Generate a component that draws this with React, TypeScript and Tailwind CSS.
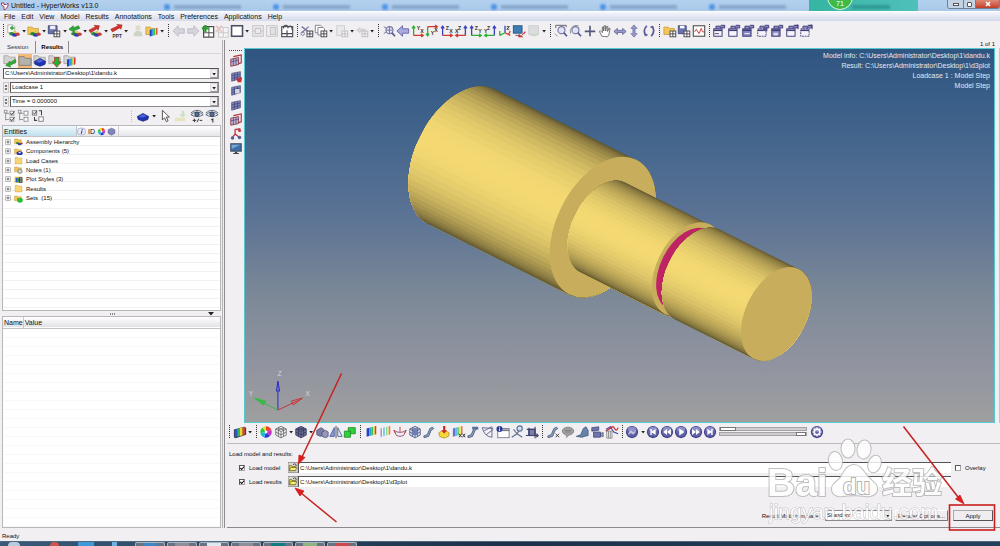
import React from 'react';

const folder = (
  <path d="M1 3.500h5l1.200 1.600H13V12H1z" fill="#f3c65a" stroke="#c6922c" strokeWidth=".8" />
);
const greyFolder = (
  <path d="M1 2h5l1.200 1.600H14V11H1z" fill="#d2d2d0" stroke="#9a9a98" strokeWidth=".8" />
);
const blobs = (
  <g>
    <ellipse cx="6.500" cy="11" rx="3" ry="2" fill="#2c8c2a" />
    <ellipse cx="10" cy="12.400" rx="3.200" ry="2.200" fill="#2d3fae" />
    <ellipse cx="13.300" cy="11.600" rx="2.400" ry="1.800" fill="#c23a3a" />
    <ellipse cx="10" cy="9.400" rx="2" ry="1.300" fill="#d9c63a" />
  </g>
);
const win = (
  <g fill="none" stroke="#4a4a50" strokeWidth="1.100">
    <rect x="8" y="8" width="6.600" height="6.600" fill="#fff" />
    <path d="M11.300 8v6.600M8 11.300h6.600" />
  </g>
);
const rainbow = (
  <g>
    <path d="M3 4l3-.8v9.500l-3 .8z" fill="#2340c8" />
    <path d="M6 3.200l2.500-.7V12l-2.500.7z" fill="#2ba5d0" />
    <path d="M8.500 2.500l2-.5v9.500l-2 .5z" fill="#3cc24c" />
    <path d="M10.500 2l1.800-.5v9.500l-1.800.5z" fill="#f2e12e" />
    <path d="M12.300 1.500l1.700-.4v9.400l-1.700.5z" fill="#e2382c" />
  </g>
);
const mesh = (
  <g>
    <path d="M3 5l10-2v8L3 14z" fill="#7d83b8" stroke="#3a3f70" strokeWidth=".7" />
    <path d="M6.300 4.300v9M9.600 3.700v8.400M3 8l10-2.300M3 11l10-2.600" stroke="#3a3f70" strokeWidth=".7" />
  </g>
);
const redMesh = (
  <g>
    <path d="M2 6l9-2v8l-9 2z" fill="#b9b4d2" stroke="#8d3340" strokeWidth="1" />
    <path d="M5 3l9-2v9l-3 1" fill="none" stroke="#b3303c" strokeWidth="1.300" />
    <path d="M5 5.300v8M8 4.700v8M2 9l9-2" stroke="#5a4a80" strokeWidth=".9" />
  </g>
);
const cube = (fill: string, line: string) => (
  <g stroke={line} strokeWidth=".9" fill={fill}>
    <path d="M8 1.500l6 3v7l-6 3.200-6-3.200v-7z" />
    <path d="M2 4.500l6 3 6-3M8 7.500v7M2 8l6 3.200L14 8M5 3v10M11 3v10M5 3l6 3M11 3L5 6" fill="none" />
  </g>
);
const axis = (c1: string, c2: string, a: string, b: string, flip: boolean, down = false) => (
  <g>
    <g transform={flip ? 'translate(16 0) scale(-1 1)' : undefined}>
      <g transform={down ? 'translate(0 16) scale(1 -1)' : undefined} fill="none" strokeWidth="1.500">
        <path d="M3 13V3M1.200 5L3 2.500 4.800 5" stroke={c1} />
        <path d="M3 13h10M11.500 11.200l2.500 1.800-2.500 1.800" stroke={c2} />
      </g>
    </g>
    <text x={flip ? 4.500 : 6.500} y={down ? 13 : 6.500} fontSize="6" fontWeight="bold" fill="#333">{a}</text>
    <text x={flip ? 1 : 10.500} y={down ? 9 : 10.500} fontSize="6" fontWeight="bold" fill="#333">{b}</text>
  </g>
);
const pages = (dx: boolean, fill: boolean) => (
  <g stroke="#3f3c7c" strokeWidth="1.100">
    <path d="M4.500 5.500V2.500h5v3M10 4.500h4.500v-3H10" fill="#8d8bc0" />
    <rect x="2" y="5.500" width="9.500" height="8.500" fill={fill ? '#8b89bd' : '#f6f4fa'} strokeDasharray={dx ? '2 1' : undefined} />
    <path d="M2 7.200h9.500" strokeWidth="1.800" />
  </g>
);
const ball = (glyph: React.ReactNode) => (
  <g>
    <circle cx="8" cy="8" r="7" fill="#45458c" />
    <circle cx="8" cy="7.500" r="5.800" fill="#6364a8" />
    <ellipse cx="8" cy="5" rx="4.500" ry="2.600" fill="#8f90c8" />
    <g fill="#fff">{glyph}</g>
  </g>
);
const beam = (
  <path d="M2 12.500l4-1.500 3-7 3-1.500 1.500 1.500-3 2-3 7-5 1.500z" fill="#8ba3c2" stroke="#3f5270" strokeWidth=".9" />
);
const lens = (
  <g fill="none">
    <circle cx="8.500" cy="7" r="4" fill="#dfe3f4" stroke="#7779a6" strokeWidth="1.300" />
    <path d="M11.300 10l3.500 4" stroke="#55558a" strokeWidth="2" />
  </g>
);
const tree = (
  <g fill="none" stroke="#8b8b93" strokeWidth="1">
    <path d="M3 2v11M3 5h4M3 12h4" />
    <rect x="1.500" y="1.500" width="3" height="3" fill="#fff" />
    <rect x="8" y="2.500" width="4.500" height="4.500" fill="#fff" />
    <rect x="8" y="9.500" width="4.500" height="4.500" fill="#fff" />
  </g>
);
const wheel = (
  <g>
    <path d="M8 8V1.500A6.500 6.500 0 0 1 14 5.500z" fill="#e8452c" />
    <path d="M8 8l6-2.500A6.500 6.500 0 0 1 12.500 12.700z" fill="#c930c4" />
    <path d="M8 8l4.500 4.700A6.500 6.500 0 0 1 6 14.200z" fill="#3038dd" />
    <path d="M8 8l-2 6.200A6.500 6.500 0 0 1 1.600 9z" fill="#20b6d8" />
    <path d="M8 8L1.600 9A6.500 6.500 0 0 1 4 2.900z" fill="#2cc63a" />
    <path d="M8 8L4 2.900A6.500 6.500 0 0 1 8 1.500z" fill="#f0dc2c" />
    <circle cx="8" cy="8" r="1.600" fill="#fff" />
  </g>
);
const eye = (
  <g fill="none" stroke="#4e5a70">
    <path d="M1 6.500Q8 .5 15 6.500Q8 11 1 6.500z" fill="#eef2f8" />
    <path d="M1 4.500Q8-1.500 15 4.500" />
    <circle cx="8" cy="6" r="2.500" fill="#58708f" stroke="#2c3c54" />
  </g>
);
const blueGem = (
  <g>
    <path d="M1.500 8.500l6.500-3.500 6.500 3.500-1 3.500-5.500 2-5.500-2z" fill="#1e32b4" stroke="#121d72" strokeWidth=".7" />
    <path d="M3 8.500l5-2.500 4 2-5 2z" fill="#4d66d8" />
  </g>
);

const ICONS: Record<string, React.ReactNode> = {
  New: <g><path d="M2 1h6l2 2v7H2z" fill="#fdfdf8" stroke="#9a9a94" strokeWidth=".8" /><path d="M7 2v5M4.500 4.500h5" stroke="#3aa13c" strokeWidth="1.600" />{blobs}</g>,
  Open: <g>{folder}{blobs}</g>,
  Save: <g><path d="M1.500 2h10v9h-10z" fill="#6c74ad" stroke="#3d447c" /><path d="M3.500 2h6v4h-6z" fill="#eef" />{win}</g>,
  Import: <g><path d="M1 6l5-4v2.500l6-2.500 1.500 3L7 7.500l1 2.500z" fill="#2fa836" stroke="#1c6e22" strokeWidth=".6" />{blobs}</g>,
  Export: <g><path d="M13 2L7 1.500l1.500 1.500L1 7l2 3 7-4.500L11.500 7z" fill="#d8322c" stroke="#8f1b18" strokeWidth=".6" />{blobs}</g>,
  'Export PPT': <g><path d="M15 1L9 .5l1.500 1.500L2 6l2 3 8-4.500L13.500 6z" fill="#d8322c" stroke="#8f1b18" strokeWidth=".6" /><text x="4" y="15.500" fontSize="5.500" fontWeight="bold" fill="#333">PPT</text></g>,
  User: <g opacity=".5"><circle cx="8" cy="4.500" r="3" fill="#d4c8a4" /><path d="M3 14c0-5 2-6 5-6s5 1 5 6z" fill="#a5bd9d" /></g>,
  Contours: <g>{folder}<g transform="translate(3 3.500) scale(.8)">{rainbow}</g></g>,
  Back: <path d="M1 8l6-6v3.500h7v5H7V14z" fill="#d6d4dc" stroke="#bcbac4" />,
  Forward: <path d="M15 8L9 2v3.500H2v5h7V14z" fill="#d6d4dc" stroke="#bcbac4" />,
  'Add page': <g><rect x="3" y="3" width="11.500" height="12" fill="#fff" stroke="#444" strokeWidth="1.300" /><path d="M3 10h11M9 3v12" stroke="#444" /><path d="M5 1v8M1 5h8" stroke="#2c9e33" strokeWidth="2.600" /></g>,
  'Delete page': <g opacity=".4"><rect x="4" y="4" width="11" height="11" fill="#fff" stroke="#888" /><path d="M1 2l7 7M8 2L1 9" stroke="#d88" strokeWidth="2.200" /><path d="M4 10h11M9.500 4v11" stroke="#888" /></g>,
  'Page layout': <rect x="1.800" y="2" width="12.500" height="12" fill="#fff" stroke="#4d5060" strokeWidth="1.800" />,
  'Expand window': <g opacity=".4" fill="none" stroke="#888" strokeWidth="1.200"><rect x="2" y="2" width="12" height="12" fill="#e6e4ea" /><path d="M5 5h6v6H5zM2 8h3M11 8h3" /></g>,
  'Shrink window': <g opacity=".4" fill="none" stroke="#888" strokeWidth="1.200"><rect x="2" y="2" width="12" height="12" fill="#f4f2f6" /><path d="M6 4h6v8H6z" fill="#ccc" /></g>,
  'Swap windows': <g fill="none" stroke="#4a4a54" strokeWidth="1.300"><rect x="2" y="3" width="12.500" height="11.500" fill="#fff" /><path d="M8 7v7.500M2 11h12M4 5q0-4 3-3.500T9 5M10 3q4-2 4 4" /></g>,
  Cut: <g><path d="M2 3l9 7M2 10l8-7" stroke="#77779c" strokeWidth="1.500" /><circle cx="3" cy="11" r="2" fill="none" stroke="#77779c" />{win}</g>,
  Copy: <g fill="#fff" stroke="#777784"><path d="M1.500 1.500h6l1.500 1.500v7H1.500z" /><path d="M4.500 4h6l1.500 1.500v7H4.500z" />{win}</g>,
  Paste: <g opacity=".3"><rect x="2" y="2" width="9" height="11" fill="#ddd" stroke="#777" />{win}</g>,
  'Paste special': <g opacity=".3"><path d="M1 7l5-4v2h6v4H6v2z" fill="#999" />{win}</g>,
  'Fit view': <g>{lens}<path d="M5 7h7M8.500 3.500v7M2 3l3 2M2 11l3-2" stroke="#6b6d92" /></g>,
  'Previous view': <path d="M1 8l6.500-6v3.500h7v5h-7V14z" fill="#a9aae0" stroke="#6264a6" />,
  'XY Top': axis('#2fae34', '#d03a30', 'Y', 'X', false),
  'XY Bottom': axis('#2fae34', '#d03a30', 'Y', 'X', false, true),
  'XZ Front': axis('#3a44b8', '#d03a30', 'Z', 'X', false),
  'XZ Rear': axis('#3a44b8', '#d03a30', 'Z', 'X', true),
  'YZ Left': axis('#3a44b8', '#2fae34', 'Z', 'Y', false),
  'YZ Right': axis('#3a44b8', '#2fae34', 'Z', 'Y', true),
  Isometric: <g fill="none" strokeWidth="1.500"><path d="M8 10V2" stroke="#3a44b8" /><path d="M8 10l-6 3M2 8v5" stroke="#2fae34" /><path d="M8 10l6 3M14 8l-2 4" stroke="#d03a30" /><path d="M10 3h3l-3 3h3" stroke="#333" strokeWidth="1" /></g>,
  'Capture view': <g><rect x="1.500" y="2" width="10" height="8.500" fill="#3d7db8" stroke="#32507a" /><path d="M4 13h6" stroke="#555" /><path d="M15 8l-5 6-2-3-1 4h6l-2-1.500L15.500 10z" fill="#c8282a" /></g>,
  'Saved views': <g opacity=".3"><rect x="2" y="2" width="11" height="10" fill="#a8b8a8" stroke="#778" /><path d="M4 14l4-5 4 5z" fill="#79a879" /></g>,
  'Zoom area': <g>{lens}<path d="M2 1.500h12M2 1.500v3M14 1.500v2" stroke="#555" fill="none" /><path d="M1 11l3 3" stroke="#888" /></g>,
  'Circle zoom': <g>{lens}<path d="M3 11A7 7 0 0 1 12 2" fill="none" stroke="#888" /></g>,
  Centre: <path d="M8 2v12M2 8.500h12" stroke="#55587c" strokeWidth="1.900" />,
  Pan: <path d="M4.500 14l-3-5.500 1.200-.8L5 10V3.500h1.500V8l.5-6h1.500L8.800 8l1-5.200h1.400L11 8.500l1.500-3.800 1.300.5L12.500 12l-1.500 2.500z" fill="#fff" stroke="#555" strokeWidth=".9" />,
  'Pan horizontal': <path d="M1 8.500L5 5v2.300h6V5l4 3.500-4 3.500V9.700H5V12z" fill="#9a9ccc" stroke="#4c4f86" strokeWidth=".8" />,
  'Pan vertical': <path d="M8 1L4.500 5h2.300v6H4.500L8 15l3.500-4H9.200V5h2.300z" fill="#9a9ccc" stroke="#6668a0" strokeWidth=".8" />,
  Rotate: <g fill="none" stroke="#5b5e9e" strokeWidth="2"><path d="M5.500 2Q0 8 5 13.500M10.500 14Q16 8 11 2.500" /><path d="M2.500 12.500h4M9.500 3.500h4" strokeWidth="1.300" /></g>,
  'Open session': <g>{folder}{win}</g>,
  'Save session': <g><path d="M1.500 2h9v9h-9z" fill="#6a72b0" stroke="#3d447c" /><path d="M3.500 2h5v3h-5z" fill="#fff" />{win}</g>,
  'Plot page': <g><rect x="1.500" y="2" width="13" height="12" fill="#fff" stroke="#555" strokeWidth="1.300" /><path d="M3 9l2-3 3 5 2.500-6 1.500 4h2" fill="none" stroke="#c9302c" /></g>,
  'Publish session': <g>{pages(false, false)}<path d="M3 11h5" stroke="#3f3c7c" /></g>,
  'Publish page': pages(false, false),
  'Publish window': <g>{pages(false, true)}<path d="M4 11h6" stroke="#fff" /></g>,
  'Publish image': <g>{pages(false, true)}<path d="M4 10h5v3H4z" fill="#dcdcf0" /></g>,
  'Capture screen': <g>{pages(true, false)}<rect x="8" y="4" width="5" height="4" fill="#56548f" /></g>,
  'Capture region': <g>{pages(false, false)}<path d="M11 2l4-1v5" fill="none" stroke="#3f3c7c" /></g>,
  'Record region': <g>{pages(true, false)}<path d="M11 2l4-1v5" fill="none" stroke="#3f3c7c" /></g>,

  'Load results': <g>{greyFolder}<path d="M14 6l-6 4V8l-5 5 6 2-1.500-1.500L15 9z" fill="#2fae34" stroke="#1d7a22" strokeWidth=".6" /></g>,
  Folder: <path d="M1 3h6l1.200 2H15v8H1z" fill="#b4b2ae" stroke="#777" strokeWidth=".9" />,
  'Component view': <g>{greyFolder}{blueGem}</g>,
  'Sets view': <g>{greyFolder}<path d="M7.500 4v5H5l5 6 5-6h-2.500V4z" fill="#22b52c" stroke="#b0302a" strokeWidth=".9" /></g>,
  'Result view': <g>{greyFolder}<g transform="translate(2 3) scale(.85)">{rainbow}</g></g>,
  'Check all': <g>{tree}<path d="M8.500 4.500l1.500 2 3-4M8.500 11.500l1.500 2 3-4" fill="none" stroke="#333" /></g>,
  'Uncheck all': tree,
  Invert: <g fill="#fff" stroke="#777"><rect x="1.500" y="2" width="5" height="5" /><path d="M2.500 4l1.500 2 2.500-4" fill="none" stroke="#333" /><rect x="9" y="9" width="5" height="5" /><path d="M9 2h3v5M4 9v4h3" fill="none" stroke="#444" strokeWidth="1.200" /></g>,
  'Entity type': blueGem,
  Select: <path d="M5 1.500v11l2.500-2.500 2 4.500 2-1-2-4.300H13z" fill="#fff" stroke="#444" />,
  Isolate: <g opacity=".5"><path d="M2 10h12v4H2z" fill="#d9dc8c" /><path d="M10 2v4H7l4 4 4-4h-2V2z" fill="#a5d6a0" /></g>,
  'Show or hide': <g>{eye}<path d="M3 13h4M5 11v4M8 15l2-4M11 13h3" stroke="#333" strokeWidth="1.100" /></g>,
  'Show only': <g>{eye}<path d="M7 12.500l2-1V15.500" stroke="#333" fill="none" strokeWidth="1.200" /></g>,

  'Mask elements': redMesh,
  'Delete elements': <g>{mesh}<path d="M15 9l-5 2-2-1 2 5h4z" fill="#cc2b31" /></g>,
  'Display mode': <g>{mesh}<path d="M7 7h5v5H7z" fill="#f4f4fa" opacity=".8" /></g>,
  'Mesh mode': mesh,
  'Section cut': redMesh,
  Measure: <g fill="none"><path d="M3 13l4-5 5 4M7 8V3l6-1" stroke="#c33a4a" strokeWidth="1.500" /><circle cx="4" cy="12.500" r="2" fill="#55609c" /><circle cx="12" cy="12" r="2" fill="#55609c" /><circle cx="12" cy="4" r="1.800" fill="#c33a4a" /></g>,
  Monitor: <g><rect x="2" y="2" width="12" height="8.500" fill="#3b6ea6" stroke="#44505e" strokeWidth="1.200" /><path d="M3 3h10L3 8z" fill="#76a6d4" /><path d="M6.800 11h2.500v1.500h2v1.300H4.800v-1.300h2z" fill="#444" /></g>,

  'Contour panel': <g><path d="M1 5l12-3 2 1v8L3 15l-2-1z" fill="#3b3f5a" /><path d="M2 5l3-.8v9L2 14z" fill="#3552cf" /><path d="M5 4.200l3-.7v9l-3 .7z" fill="#35b954" /><path d="M8 3.500l3-.7v9l-3 .7z" fill="#f1d62c" /><path d="M11 2.800l2.500-.6v8.600l-2.500.8z" fill="#dd4a2b" /></g>,
  'Colour wheel': wheel,
  'Wire mesh': cube('#f4f4f4', '#5f5f66'),
  'Shaded mesh': cube('#6d6f96', '#33355c'),
  'Transparency cubes': <g fill="#7b7da6" stroke="#44466e" strokeWidth=".8"><path d="M2 6l5-3 3 2v6l-4 2-4-2z" /><path d="M8 8l4-2 3 2v5l-3 1.500-4-1.500z" fill="#9698bd" /></g>,
  Symmetry: <g><path d="M6 3v10H1z" fill="#8b9dd6" stroke="#485c9c" /><path d="M10 3v10h5z" fill="#e8ecf8" stroke="#485c9c" /><path d="M8 1v14" stroke="#444" /></g>,
  'Green cubes': <g fill="#2fd03c" stroke="#168a20" strokeWidth=".9"><path d="M6 3h8v7H6z" /><path d="M1.500 7h7v7h-7z" /></g>,
  'Contour map': rainbow,
  'Iso map': <g opacity=".65">{rainbow}<path d="M5 3v9.500M8.500 2.500v9.500" stroke="#fff" strokeWidth="1.500" /></g>,
  'Deformed shape': <g fill="none"><path d="M1 6q7 5 14 0l-3 6q-4 2-8 0z" fill="#f0eaf2" stroke="#8a4a6a" /><path d="M1 6l2 4M8 2v6M15 6l-2 4" stroke="#c03a3a" /></g>,
  'Iso surface': <g>{cube('#d8dcec', '#4a5480')}<path d="M5 7l3-2 3 2v4l-3 1-3-1z" fill="#6d7fb4" /></g>,
  'Beam section': beam,
  'Apply load': <g><path d="M2 9l3-2h6l3 2-1 4-5 2-5-2z" fill="#f5d83b" stroke="#a48a1c" strokeWidth=".8" /><path d="M7 1h2.500v5h2L8.200 10 5 6h2z" fill="#cf2622" /></g>,
  Derived: <g><g opacity=".7" transform="translate(-2 0)">{rainbow}</g><path d="M8 10l3 4M11 10l-3 4M12 10l3 4M15 10l-3 4" stroke="#333" strokeWidth="1.100" /></g>,
  'Beam stress': <g>{beam}<path d="M7 2h7v3H7z" fill="#56719c" /></g>,
  Streamlines: <g fill="none" stroke="#5a5f8a"><path d="M1.500 3q2 10 11 11V2M1.500 3l12 1M3 7l9-5M6 11l8-6" /></g>,
  'Entity note': <g><rect x="2" y="4" width="13" height="10.500" fill="#fff" stroke="#76788c" /><path d="M2 6h13" stroke="#76788c" strokeWidth="2" /><circle cx="4" cy="4.500" r="3.500" fill="#2e3b96" /><path d="M4 4v3M4 2v1" stroke="#fff" /></g>,
  Tracking: <g fill="none" stroke="#5c6f92" strokeWidth="1.300"><circle cx="11" cy="4" r="3" fill="#cfe4ee" /><path d="M10 7l-2 3-6 4M8 10l6 4M4 5l4 5" /></g>,
  'System axes': <g fill="none" stroke="#3f4166" strokeWidth="1.300"><rect x="4.500" y="5" width="7" height="7" fill="#7b7eae" /><path d="M1 12h14M11.500 2v13M4.500 3v9M2 5h9.500M13 10l2 2-2 2" /></g>,
  'Vector edit': <g>{beam}<path d="M11 10l4 4M15 10l-4 4" stroke="#333" /></g>,
  Note: <g><ellipse cx="8" cy="7" rx="6.500" ry="4.500" fill="#a2a2a2" stroke="#7e7e7e" /><path d="M5 10l1 5 4-4z" fill="#9a9a9a" /><path d="M4 6h8M5 8h6" stroke="#7a7a7a" /></g>,
  'Beam tool': <path d="M1.500 13l5-2 3-7 3-2 2.500 4v6l-4 1-3 1z" fill="#6684aa" stroke="#3a5070" strokeWidth=".8" />,
  'Animation record': <g fill="#6f74ac" stroke="#3e4272" strokeWidth=".8"><path d="M2 3l8-1v4l-8 1zM4 8h8v6H4z" /><path d="M12 10l3-1.500v5L12 12z" fill="#9ab" /></g>,
  'Build plots': <g fill="none"><path d="M6 4q3-4 5 0t4-1" stroke="#cb2f3a" strokeWidth="1.500" /><path d="M1 5l5-3 4 6 5 2" stroke="#3c48b8" strokeWidth="1.200" /><path d="M1 7l6-4" stroke="#cb2f3a" strokeWidth="1.500" /><path d="M2 7h6v8H2zM4 7v8M6 7v8" stroke="#888" /></g>,

  Transient: ball(<path d="M4 9.500q2-5 4-2.500t4-2v3q-2 4-4 2t-4 2z" opacity=".6" />),
  First: ball(<path d="M5 4.500h1.600v3L11 4.500v7L6.600 8.500v3H5z" />),
  Rewind: ball(<path d="M8 4.500v7L3.500 8zM12.500 4.500v7L8 8z" />),
  Play: ball(<path d="M6 4l6 4-6 4z" />),
  'Fast forward': ball(<path d="M8 4.500v7L12.500 8zM3.500 4.500v7L8 8z" />),
  Last: ball(<path d="M11 4.500H9.400v3L5 4.500v7l4.400-3v3H11z" />),
  Settings: (
    <g>
      {ball(null)}
      <circle cx="8" cy="8" r="3.200" fill="none" stroke="#fff" strokeWidth="1.800" />
      <path d="M8 2.800v2M8 11.200v2M2.800 8h2M11.200 8h2M4.300 4.300l1.400 1.400M10.300 10.300l1.400 1.400M11.700 4.300l-1.400 1.400M5.700 10.300l-1.400 1.400" stroke="#fff" strokeWidth="1.400" />
    </g>
  ),

  Assembly: <g>{folder}{blobs}</g>,
  Components: <g>{folder}<ellipse cx="10" cy="11" rx="5.500" ry="3.300" fill="#1f2fae" /><ellipse cx="10" cy="10" rx="2.200" ry="1" fill="#fff" /></g>,
  Plain: <path d="M2 2.500h5l1 1.500h6V14H2z" fill="#f6d679" stroke="#cf9f3c" strokeWidth=".9" />,
  Notes: <g>{folder}<circle cx="10.500" cy="11" r="4" fill="#b9b9b4" stroke="#77776f" /><circle cx="10.500" cy="11" r="1.500" fill="#eee" /></g>,
  Styles: <g><path d="M1 3h13v11H1z" fill="#f3c65a" /><path d="M3 5h3.500v8H3z" fill="#3550cc" /><path d="M6.500 5H9v8H6.500z" fill="#2c9c3c" /><path d="M9 4h6v10H9z" fill="#333" /><path d="M10.500 6h3M10.500 9h3M10.500 12h3" stroke="#fff" strokeWidth="1.200" /></g>,
  Sets: <g>{folder}<path d="M6 8h4l1-1 4 2v4l-3 2-5-1z" fill="#27c02f" stroke="#148a1c" strokeWidth=".7" /></g>,
  Info: <g><rect x="1" y="2" width="14" height="12" rx="5" fill="#e6eaf6" stroke="#8e97b8" /><path d="M9 6.500L7.500 12M9.500 3.500l-.4 1.500" stroke="#3446b0" strokeWidth="2" /></g>,
  Gem: <path d="M2 5l6-3 6 3v6l-6 3.500L2 11z" fill="#8284bc" stroke="#55578e" />,
  'Browse file': <g><rect x="0" y="0" width="16" height="16" fill="#dbd8d0" stroke="#777" /><path d="M2 5h4l1 1.500h5V13H2z" fill="#e6d83a" stroke="#55501a" /><path d="M2 13l2.500-5H14l-2 5z" fill="#f7ef7a" stroke="#55501a" /><path d="M8 3.500q3-3 5 0v2.500" fill="none" stroke="#222" strokeWidth="1.200" /></g>,
};

function Icon({ name, size = 'w-[14px] h-[14px]' }: { name: string; size?: string }) {
  return (
    <svg viewBox="0 0 16 16" className={`${size} block shrink-0`} aria-hidden="true">
      {ICONS[name]}
    </svg>
  );
}

function Tool({ name, active }: { name: string; active?: boolean }) {
  return (
    <button type="button" aria-label={name} className={`block shrink-0 ${active ? 'bg-[#f6b877]' : ''}`}>
      <Icon name={name} />
    </button>
  );
}

function Caret() {
  return (
    <svg viewBox="0 0 6 6" className="h-[6px] w-[6px] shrink-0" aria-hidden="true">
      <path d="M1.300 2h3.600L3.100 4.500z" fill="#222" />
    </svg>
  );
}

function Grip() {
  return <span className="mr-[2px] h-[13px] w-0 shrink-0 border-l border-dotted border-[#333]" />;
}

function Group({ items, width }: { items: string[]; width: string }) {
  return (
    <div className={`flex shrink-0 items-center justify-between pr-[2px] pl-px ${width}`}>
      <Grip />
      {items.map((n, i) => (n === 'v' ? <Caret key={i} /> : n === '_' ? <span key={i} className="w-px" /> : <Tool key={i} name={n} />))}
    </div>
  );
}

const TOP_GROUPS: { width: string; items: string[] }[] = [
  { width: 'w-[165px]', items: ['New', 'v', 'Open', 'v', 'Save', 'v', 'Import', 'v', 'Export', 'v', 'Export PPT', 'v', '_', 'User', 'Contours', 'v'] },
  { width: 'w-[129px]', items: ['Back', 'Forward', 'Add page', 'Delete page', 'Page layout', 'v', 'Expand window', 'Shrink window', 'Swap windows'] },
  { width: 'w-[81px]', items: ['Cut', 'Copy', 'v', 'Paste', 'v', 'Paste special', 'v'] },
  { width: 'w-[172px]', items: ['Fit view', 'Previous view', 'XY Top', 'XY Bottom', 'XZ Front', 'XZ Rear', 'YZ Left', 'YZ Right', 'Isometric', 'Capture view', 'Saved views', 'v'] },
  { width: 'w-[109px]', items: ['Zoom area', 'Circle zoom', 'Centre', 'Pan', 'Pan horizontal', 'Pan vertical', 'Rotate'] },
  { width: 'w-[50px]', items: ['Open session', 'Save session', 'Plot page'] },
  { width: 'w-[107px]', items: ['Publish session', 'Publish page', 'Publish window', 'Capture screen', 'Publish image', 'Capture region', 'Record region'] },
];

const BOTTOM_GROUPS: { width: string; items: string[] }[] = [
  { width: 'w-[27px]', items: ['Contour panel', 'v'] },
  { width: 'w-[104px]', items: ['Colour wheel', 'Wire mesh', 'v', 'Shaded mesh', 'v', 'Transparency cubes', 'Symmetry', 'Green cubes'] },
  { width: 'w-[182px]', items: ['Contour map', 'Iso map', 'Deformed shape', 'Iso surface', 'Beam section', 'Apply load', 'Derived', 'Beam stress', 'Streamlines', 'Entity note', 'Tracking', 'System axes'] },
  { width: 'w-[80px]', items: ['Vector edit', 'Note', 'Beam tool', 'Animation record', 'Build plots'] },
  { width: 'w-[98px]', items: ['Transient', 'v', 'First', 'Rewind', 'Play', 'Fast forward', 'Last'] },
];

const MENUS = ['File', 'Edit', 'View', 'Model', 'Results', 'Annotations', 'Tools', 'Preferences', 'Applications', 'Help'];

const TREE = [
  { icon: 'Assembly', label: 'Assembly Hierarchy' },
  { icon: 'Components', label: 'Components (5)' },
  { icon: 'Plain', label: 'Load Cases' },
  { icon: 'Notes', label: 'Notes (1)' },
  { icon: 'Styles', label: 'Plot Styles (3)' },
  { icon: 'Plain', label: 'Results' },
  { icon: 'Sets', label: 'Sets  (15)' },
];

function TitleBar() {
  return (
    <header className="relative flex h-[11px] shrink-0 items-center overflow-hidden bg-linear-to-b from-[#b3d0ee] to-[#a9c9ea]">
      <svg viewBox="0 0 16 16" className="ml-px h-2 w-2" aria-hidden="true">
        <path d="M1 2h5v3h5l3-3v6l-5 7H6V9L1 6z" fill="#fff" stroke="#a02c4c" strokeWidth="1.800" />
      </svg>
      <h1 className="z-10 ml-[2px] text-[7px] leading-none text-[#111]">Untitled - HyperWorks v13.0</h1>
      <div className="ml-[66px] flex h-full flex-1 items-end gap-[32px] overflow-hidden pb-px blur-[1px]" aria-hidden="true">
        {[0, 1, 2, 3, 4, 5].map((i) => (
          <span key={i} className="flex shrink-0 items-center gap-1">
            <span className="h-[6px] w-[6px] rounded-full bg-[#4d93e6]" />
            <span className="h-[4px] w-[67px] bg-[#8aa8c9]" />
          </span>
        ))}
      </div>
      <div className="flex h-full w-[109px] items-end justify-end bg-linear-to-r from-[#35b5a2] to-[#4fc0bb] pr-[28px] pb-[2px]">
        <span className="h-[4px] w-[38px] bg-[#2f9a96] blur-[1px]" />
      </div>
      <div className="h-full w-[29px]" />
      <div className="flex h-[9px] self-start overflow-hidden rounded-b-[3px] border border-t-0 border-[#6f8296]">
        <button type="button" aria-label="Minimize" className="flex w-[16px] items-center justify-center border-r border-[#6f8296] bg-[#c3d3e4]">
          <span className="h-[3px] w-[6px] border border-[#555] bg-white" />
        </button>
        <button type="button" aria-label="Restore" className="flex w-[12px] items-center justify-center border-r border-[#6f8296] bg-[#c3d3e4]">
          <span className="h-[5px] w-[5px] rounded-[1px] border border-[#555] bg-white" />
        </button>
        <button type="button" aria-label="Close" className="flex w-[23px] items-center justify-center bg-linear-to-b from-[#dd8a77] to-[#c23a24]">
          <svg viewBox="0 0 6 6" className="h-[6px] w-[6px]" aria-hidden="true">
            <path d="M1 1l4 4M5 1L1 5" stroke="#fff" strokeWidth="1.500" />
          </svg>
        </button>
      </div>
      <span className="absolute -top-[17px] right-[147px] flex h-[27px] w-[26px] items-end justify-center rounded-full border border-[#e5f5e5] bg-[#3dbb45] pb-[2px] text-[7px] leading-none text-white">
        71
      </span>
    </header>
  );
}

function Combo({ label, value, spin }: { label: string; value: string; spin?: boolean }) {
  return (
    <div className="flex h-[11px] items-stretch gap-px pl-[3px]">
      {spin && (
        <span className="flex w-[6px] flex-col justify-between border border-[#c8c6c8] bg-[#f2f0f2]" aria-hidden="true">
          <svg viewBox="0 0 6 10" className="h-full w-full">
            <path d="M1 3.500L3 1l2 2.500zM1 6.500L3 9l2-2.500z" fill="#111" />
          </svg>
        </span>
      )}
      <div className="relative flex-1 border border-[#8a8a8c] border-t-[#555] border-l-[#555] bg-white">
        <select aria-label={label} className="block h-full w-full appearance-none pl-px leading-[9px] text-[#111] outline-none">
          <option>{value}</option>
        </select>
        <span className="pointer-events-none absolute inset-y-0 right-0 flex w-[8px] items-center justify-center border border-[#dddbdd] border-r-[#999] border-b-[#999] bg-[#f1eff1]">
          <Caret />
        </span>
      </div>
    </div>
  );
}

function Sidebar() {
  return (
    <aside className="mr-px flex w-[223px] shrink-0 flex-col border-r border-[#b4b2b4] pr-px">
      <nav className="flex h-[13px] items-end gap-[7px] pl-[7px] leading-[10px]">
        <button type="button" className="pb-px text-[#333]">Session</button>
        <button type="button" className="h-[12px] border-x border-[#8e8c8e] px-[5px] pb-px font-bold text-black">Results</button>
      </nav>
      <div className="flex h-[15px] items-center gap-px border-t border-[#d8d6d8] pl-[3px]">
        <Tool name="Load results" />
        <Tool name="Folder" active />
        <Tool name="Component view" />
        <Tool name="Sets view" />
        <Tool name="Result view" />
      </div>
      <div className="flex flex-col gap-[3px] pr-[2px]">
        <Combo label="Model file" value="C:\Users\Administrator\Desktop\1\dandu.k" />
        <Combo label="Loadcase" value="Loadcase 1" spin />
        <Combo label="Simulation" value="Time = 0.000000" spin />
      </div>
      <div className="flex h-[18px] items-center justify-between pr-[2px] pl-[3px]">
        <div className="flex">
          <Tool name="Check all" />
          <Tool name="Uncheck all" />
          <Tool name="Invert" />
        </div>
        <div className="flex items-center gap-px">
          <span className="mr-[3px] h-[11px] border-l border-dotted border-[#bbb]" />
          <Tool name="Entity type" />
          <Caret />
          <Tool name="Select" />
          <Tool name="Isolate" />
          <span className="w-px" />
          <Tool name="Show or hide" />
          <Tool name="Show only" />
        </div>
      </div>
      <div className="ml-[2px] flex h-[186px] shrink-0 flex-col border border-[#b9b7b9] bg-white">
        <div className="flex h-[11px] shrink-0 items-center border-b border-[#c4c4c8] bg-linear-to-b from-white to-[#e6e6ea] text-[7px] leading-none text-[#111]">
          <span className="flex h-full w-[74px] items-center border-r border-[#c0c6cc] bg-linear-to-b from-[#eef8fc] to-[#bfe0ee] pl-px">Entities</span>
          <span className="flex h-full items-center gap-px border-r border-[#d0d0d4] pr-[2px]">
            <Icon name="Info" size="w-[9px] h-[9px]" />
            <span className="px-px">ID</span>
            <Icon name="Colour wheel" size="w-[9px] h-[9px]" />
            <Icon name="Gem" size="w-[9px] h-[9px]" />
          </span>
        </div>
        <div className="flex-1 bg-[linear-gradient(to_bottom,transparent_8px,#f1f1f3_8px)] bg-[length:100%_9px]">
          <ul className="grid h-[66px] auto-rows-fr">
            {TREE.map((t) => (
              <li key={t.label} className="flex items-center gap-[3px] pl-[2px] leading-none whitespace-pre text-[#111]">
                <svg viewBox="0 0 7 7" className="h-[6px] w-[6px]" aria-hidden="true">
                  <rect x=".5" y=".5" width="6" height="6" rx="1" fill="#eee" stroke="#999" strokeWidth=".8" />
                  <path d="M2 3.500h3M3.500 2v3" stroke="#444" strokeWidth=".8" />
                </svg>
                <Icon name={t.icon} size="w-[9px] h-[9px]" />
                <span>{t.label}</span>
              </li>
            ))}
          </ul>
        </div>
      </div>
      <div className="flex h-[5px] shrink-0 items-center justify-end pr-[7px]" aria-hidden="true">
        <span className="mr-[93px] h-[2px] w-[5px] border-y border-dotted border-[#888]" />
        <svg viewBox="0 0 6 4" className="h-[4px] w-[6px]"><path d="M0 0h6L3 3.500z" fill="#222" /></svg>
      </div>
      <div className="ml-[2px] flex flex-1 flex-col border border-[#b9b7b9] bg-white">
        <table className="w-full border-collapse text-left text-[7px] leading-none text-[#111]">
          <thead>
            <tr className="h-[11px] border-b border-[#c4c4c8] bg-linear-to-b from-white to-[#e2e2e6]">
              <th className="w-[20px] border-r border-[#c8c8cc] p-0 pl-px font-normal">Name</th>
              <th className="p-0 pl-px font-normal">Value</th>
            </tr>
          </thead>
        </table>
        <div className="flex-1 bg-[linear-gradient(to_bottom,transparent_8px,#f8f8fa_8px)] bg-[length:100%_9px]" />
      </div>
    </aside>
  );
}

const AXIS_DEG = 26.6;
const FACETS = 36;

function shade(t: number) {
  const light = Math.max(0, Math.sin(Math.PI * t));
  const k = 0.34 + 0.66 * Math.pow(light, 1.05);
  return `rgb(${Math.round(244 * k)},${Math.round(217 * k)},${Math.round(115 * k)})`;
}

function Shaft({ id, x, y, length, major, minor }: { id: string; x: number; y: number; length: number; major: number; minor: number }) {
  const bands = Array.from({ length: FACETS }, (_, i) => {
    const from = -major * Math.cos((Math.PI * i) / FACETS);
    return { from, height: major - from, fill: shade((i + 0.5) / FACETS) };
  });
  return (
    <g transform={`translate(${x} ${y}) rotate(${AXIS_DEG})`}>
      <clipPath id={id}>
        <path d={`M0 ${-major}H${length}A${minor} ${major} 0 0 1 ${length} ${major}H0A${minor} ${major} 0 0 1 0 ${-major}z`} />
      </clipPath>
      <g clipPath={`url(#${id})`}>
        {bands.map((b) => (
          <rect key={b.from} x={-minor} y={b.from} width={length + minor * 2} height={b.height} fill={b.fill} />
        ))}
      </g>
    </g>
  );
}

function Face({ x, y, major, minor, fill }: { x: number; y: number; major: number; minor: number; fill: string }) {
  return <ellipse rx={minor} ry={major} fill={fill} transform={`translate(${x} ${y}) rotate(${AXIS_DEG})`} />;
}

function Model() {
  return (
    <svg viewBox="0 0 750 374" preserveAspectRatio="xMidYMid meet" className="block h-full w-full" role="img" aria-label="Stepped shaft model">
      <g transform="translate(-245 -49)">
        <Shaft id="shaft-large" x={461.5} y={156.8} length={158.4} major={75.3} minor={46} />
        <Face x={603.2} y={227.5} major={75.3} minor={46} fill="#c8ae5c" />
        <Shaft id="shaft-middle" x={603.4} y={227.9} length={94.5} major={50.3} minor={30.7} />
        <Face x={688} y={269.7} major={50.3} minor={30.7} fill="#c8ae5c" />
        <Face x={688} y={269.7} major={44.4} minor={27} fill="#be2463" />
        <Shaft id="shaft-small" x={698} y={275} length={88.6} major={50.3} minor={30.7} />
        <Face x={777.3} y={314.7} major={50.3} minor={30.7} fill="#c8ae5c" />
      </g>
      <g fill="none" strokeWidth="1">
        <path d="M32.500 362V334" stroke="#2a2fc4" />
        <path d="M31 343l1.500-10 1.700 10z" stroke="#2a2fc4" fill="#7379c8" />
        <path d="M32.500 362L10 351" stroke="#39b84a" />
        <path d="M9 350l11 3-2 4z" stroke="#39b84a" fill="#39b84a" />
        <path d="M32.500 362L56 351" stroke="#cc3436" />
        <path d="M57 350l-11 3 2 4z" stroke="#cc3436" />
      </g>
      <g fill="#d4d6da" fontSize="7">
        <text x="32" y="328">Z</text>
        <text x="3" y="348">Y</text>
        <text x="60" y="348">X</text>
      </g>
    </svg>
  );
}

function Viewport() {
  return (
    <main className="relative min-w-0 flex-1 border border-[#53c9cf] bg-[linear-gradient(#2f5581,#3a5f88_15%,#5b7395_45%,#7f8a98_68%,#9194a0_85%,#9f9f9f)]">
      <Model />
      <div className="absolute top-[2px] right-[4px] text-right text-[7px] leading-[10px] text-[#e4e8ee]">
        <p>Model info: C:\Users\Administrator\Desktop\1\dandu.k</p>
        <p>Result: C:\Users\Administrator\Desktop\1\d3plot</p>
        <p>Loadcase 1 : Model Step</p>
        <p>Model Step</p>
      </div>
    </main>
  );
}

function CheckBox({ id, label, checked }: { id: string; label: string; checked?: boolean }) {
  return (
    <span className="flex items-center gap-[4px]">
      <span className="relative flex h-[6px] w-[6px]">
        <input
          id={id}
          type="checkbox"
          defaultChecked={checked}
          className="peer h-[6px] w-[6px] appearance-none border border-[#a8a6a8] border-t-[#555] border-l-[#555] bg-white"
        />
        <svg viewBox="0 0 6 6" className="pointer-events-none absolute inset-0 hidden h-[6px] w-[6px] peer-checked:block" aria-hidden="true">
          <path d="M1.300 2.800l1.400 1.700 2.500-3" fill="none" stroke="#000" strokeWidth="1.100" />
        </svg>
      </span>
      <label htmlFor={id}>{label}</label>
    </span>
  );
}

function PathRow({ id, label, value, children }: { id: string; label: string; value: string; children?: React.ReactNode }) {
  return (
    <div className="flex h-[11px] items-center">
      <div className="w-[49px] shrink-0">
        <CheckBox id={id} label={label} checked />
      </div>
      <button type="button" aria-label={`Browse ${label}`} className="shrink-0">
        <Icon name="Browse file" size="w-[10px] h-[11px]" />
      </button>
      <input
        type="text"
        aria-label={`${label} path`}
        defaultValue={value}
        className="h-[11px] min-w-0 flex-1 border-t border-l border-[#555] bg-white pl-px leading-none text-[#111] outline-none"
      />
      <div className="w-[49px] shrink-0 pl-[4px]">{children}</div>
    </div>
  );
}

function PanelArea() {
  return (
    <section className="flex h-[85px] shrink-0 flex-col border-t border-b border-t-[#bdbbbd] border-b-[#8c8a8c] pl-[2px] leading-none text-[#111]">
      <p className="pt-[7px] pb-[5px]">Load model and results:</p>
      <div className="flex flex-col gap-[3px] pl-[10px]">
        <PathRow id="load-model" label="Load model" value="C:\Users\Administrator\Desktop\1\dandu.k">
          <CheckBox id="overlay" label="Overlay" />
        </PathRow>
        <PathRow id="load-results" label="Load results" value="C:\Users\Administrator\Desktop\1\d3plot" />
      </div>
      <div className="mt-auto mb-[6px] flex items-center justify-end pr-[7px]">
        <label htmlFor="template">Result Math template:</label>
        <span className="relative mr-[3px] ml-[5px] h-[11px] w-[67px] border border-[#8a8a8c] bg-white">
          <select id="template" className="block h-full w-full appearance-none pl-px leading-[9px] outline-none">
            <option>Standard</option>
          </select>
          <span className="pointer-events-none absolute inset-y-0 right-0 flex w-[7px] items-center justify-center bg-[#e9e7e9]">
            <Caret />
          </span>
        </span>
        <button type="button" className="mr-[5px] h-[11px] w-[53px] border border-[#fff] border-r-[#777] border-b-[#777] bg-[#efedef] whitespace-nowrap">Reader Options...</button>
        <button type="button" className="h-[11px] w-[40px] border border-[#aaa] border-r-[#555] border-b-[#555] bg-[#efedef]">Apply</button>
      </div>
    </section>
  );
}

function Watermark() {
  return (
    <svg viewBox="0 0 184 90" className="pointer-events-none absolute right-[52px] bottom-[20px] h-[90px] w-[184px]" aria-hidden="true">
      <g fill="#fff" stroke="#b4b2b4" strokeWidth="2" paintOrder="stroke" opacity=".82">
        <text x="3" y="60" fontSize="39" fontWeight="bold">Bai</text>
        <ellipse cx="71.500" cy="25" rx="6.500" ry="9" transform="rotate(-12 71.500 25)" />
        <ellipse cx="84" cy="12.500" rx="6.500" ry="9" />
        <ellipse cx="100" cy="13.500" rx="6.500" ry="9" transform="rotate(8 100 13.500)" />
        <ellipse cx="110.500" cy="28" rx="6" ry="8.500" transform="rotate(20 110.500 28)" />
        <path d="M90 29c7 0 10 8 15 13s9 7 8 12-7 7-12 6-17-1-22 0-11-1-11-7 6-7 9-12 6-12 13-12z" />
        <text x="118" y="57" fontSize="30" fontWeight="bold" className="[font-family:'Noto_Sans_CJK_SC',sans-serif]">经验</text>
        <text x="5" y="83" fontSize="21" strokeWidth="1">jingyan.baidu.com</text>
      </g>
      <text x="79" y="58" fontSize="22" fontWeight="bold" fill="#fff" stroke="#b4b2b4" strokeWidth="2" paintOrder="stroke">du</text>
    </svg>
  );
}

function Callouts() {
  return (
    <>
      <svg viewBox="0 0 60 160" className="pointer-events-none absolute bottom-[16px] left-[290px] h-[160px] w-[60px]" aria-hidden="true">
        <g fill="#e01b1b" stroke="#c8201f" strokeWidth="1.500">
          <path d="M51.500 3.500L12 87" />
          <path d="M8.500 94l.5-9 6 2.500z" strokeWidth=".8" />
          <path d="M46.500 152L11 123" />
          <path d="M5 118l9 3-4 5z" strokeWidth=".8" />
        </g>
      </svg>
      <svg viewBox="0 0 100 110" className="pointer-events-none absolute right-0 bottom-[14px] h-[110px] w-[100px]" aria-hidden="true">
        <g fill="#e01b1b" stroke="#c8201f" strokeWidth="1.500">
          <path d="M3.500 4.500L58 75" />
          <path d="M64 82l-8.500-5 4.500-4z" strokeWidth=".8" />
          <rect x="49.500" y="83" width="45" height="25" fill="none" strokeWidth="1.600" />
        </g>
      </svg>
    </>
  );
}

const TASKS = ['bg-[#3f86c2]', 'bg-[#8f8d9c]', 'bg-[#dfe8f0]', 'bg-[#8d8f98]', 'bg-[#127d80]', 'bg-[#8fb37f]', 'bg-[#c94a4c]'];

export default function App() {
  return (
    <div className="relative flex h-screen min-h-[400px] flex-col overflow-hidden bg-[#f1eff1] text-[6px] [font-family:'Liberation_Sans',Arial,sans-serif]">
      <TitleBar />
      <nav className="flex h-[10px] shrink-0 items-center gap-[6px] border-t border-[#fff] bg-linear-to-b from-[#f4f6fc] to-[#d5daec] pl-[4px] text-[7px] leading-none text-[#111]">
        {MENUS.map((m) => (
          <button key={m} type="button">{m}</button>
        ))}
      </nav>
      <div className="flex h-[19px] shrink-0 items-center pl-[2px]">
        {TOP_GROUPS.map((g, i) => (
          <Group key={i} width={g.width} items={g.items} />
        ))}
      </div>
      <div className="flex min-h-0 flex-1">
        <Sidebar />
        <div className="flex min-w-0 flex-1 flex-col border-l border-[#8f8d8f] pl-[2px]">
          <p className="h-[8px] shrink-0 pr-[5px] text-right leading-[8px] text-[#111]">1 of 1</p>
          <div className="flex min-h-0 flex-1 border-r border-[#c6c4c6] pr-[4px]">
            <div className="flex w-[17px] shrink-0 flex-col items-center">
              <span className="mt-[2px] mb-[3px] w-[13px] border-t border-dotted border-[#444]" />
              <div className="flex h-[102px] flex-col justify-between">
                <Tool name="Mask elements" />
                <Tool name="Delete elements" />
                <Tool name="Display mode" />
                <Tool name="Mesh mode" />
                <Tool name="Section cut" />
                <Tool name="Measure" />
                <Tool name="Monitor" />
              </div>
            </div>
            <Viewport />
          </div>
          <div className="flex h-[20px] shrink-0 items-center pb-[3px] pl-px">
            {BOTTOM_GROUPS.map((g, i) => (
              <Group key={i} width={g.width} items={g.items} />
            ))}
            <div className="mr-[3px] flex w-[88px] flex-col gap-px">
              <input
                type="range"
                aria-label="Frame"
                defaultValue={0}
                className="h-[4px] w-full appearance-none border border-[#a5a3a5] bg-[#cfcdcf] [&::-webkit-slider-thumb]:h-[4px] [&::-webkit-slider-thumb]:w-[16px] [&::-webkit-slider-thumb]:appearance-none [&::-webkit-slider-thumb]:border [&::-webkit-slider-thumb]:border-[#777] [&::-webkit-slider-thumb]:bg-white"
              />
              <input
                type="range"
                aria-label="Speed"
                defaultValue={100}
                className="h-[4px] w-full appearance-none border border-[#a5a3a5] bg-[#cfcdcf] [&::-webkit-slider-thumb]:h-[4px] [&::-webkit-slider-thumb]:w-[10px] [&::-webkit-slider-thumb]:appearance-none [&::-webkit-slider-thumb]:border [&::-webkit-slider-thumb]:border-[#777] [&::-webkit-slider-thumb]:bg-white"
              />
            </div>
            <Tool name="Settings" />
          </div>
          <PanelArea />
        </div>
      </div>
      <footer className="flex h-[13px] shrink-0 items-center pt-[3px] pl-[2px] leading-none text-[#111]">Ready</footer>
      <div className="flex h-[5px] shrink-0 items-stretch gap-[2px] border-t border-[#4d6a80] bg-linear-to-r from-[#3a5a78] via-[#1c3048] to-[#24405c]" aria-hidden="true">
        <span className="ml-[8px] w-[12px] rounded-t-full bg-[#b8cbdc]" />
        <span className="ml-[28px] w-[9px] rounded-t-full bg-[#c8564c]" />
        <span className="ml-[17px] w-[16px] bg-[#3d9ad8]" />
        <span className="mr-[16px] ml-[16px] w-[5px] bg-[#6fb0e0]" />
        {TASKS.map((c) => (
          <span key={c} className="flex w-[30px] justify-center rounded-t-[2px] border border-b-0 border-[#a9b6c2] bg-[#66747f]">
            <span className={`w-[14px] ${c}`} />
          </span>
        ))}
      </div>
      <Watermark />
      <Callouts />
    </div>
  );
}
